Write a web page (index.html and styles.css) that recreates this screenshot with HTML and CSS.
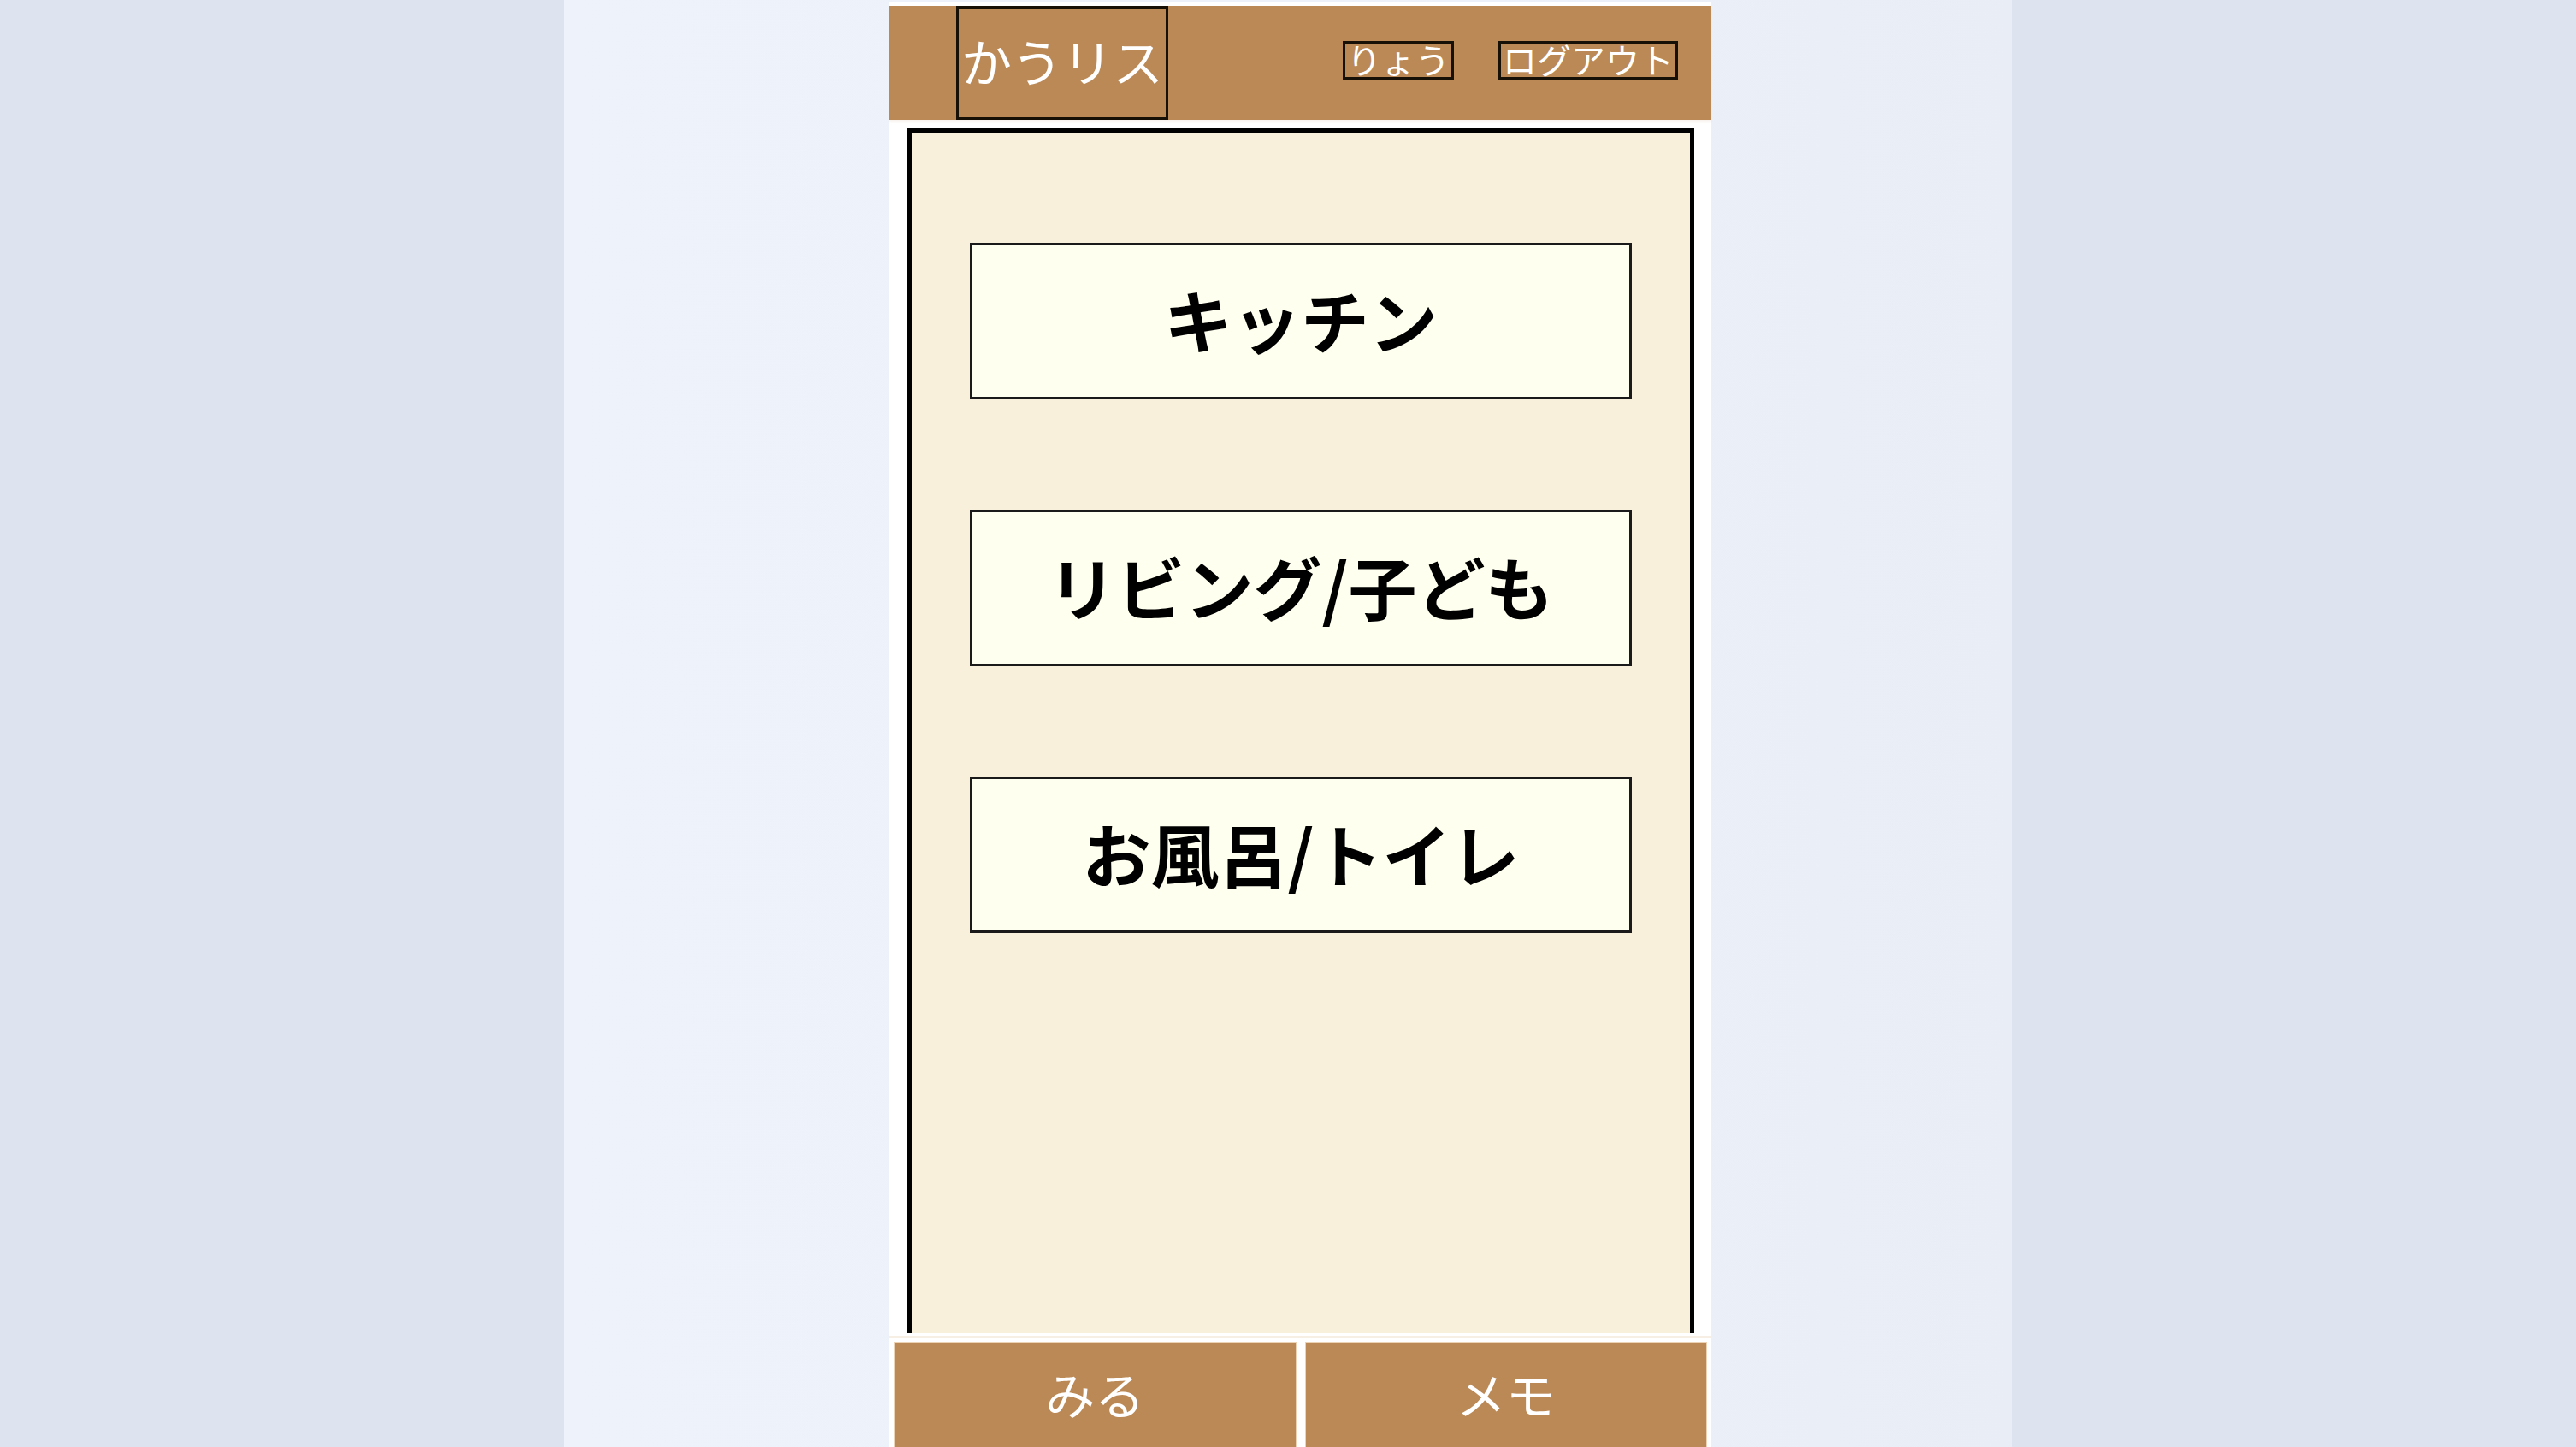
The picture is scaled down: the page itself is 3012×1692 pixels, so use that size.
FILE: index.html
```html
<!DOCTYPE html>
<html lang="ja">
<head>
<meta charset="utf-8">
<title>かうリス</title>
<link rel="stylesheet" href="styles.css">
</head>
<body>
<div class="stage">
  <div class="panel">
    <div class="app">
      <header class="topbar">
        <div class="logo">かうリス</div>
        <nav class="top-links">
          <a class="tag">りょう</a>
          <a class="tag">ログアウト</a>
        </nav>
      </header>
      <main class="board">
        <a class="room">キッチン</a>
        <a class="room">リビング/子ども</a>
        <a class="room">お風呂/トイレ</a>
      </main>
      <footer class="tabs">
        <a class="tab">みる</a>
        <a class="tab">メモ</a>
      </footer>
    </div>
  </div>
</div>
</body>
</html>
```
FILE: styles.css
```css
html, body {
  margin: 0;
  padding: 0;
}
body {
  background: #dde4ef;
  font-family: "Noto Sans CJK JP", "Noto Sans", sans-serif;
  overflow: hidden;
}
.stage {
  display: flex;
  justify-content: flex-start;
  min-height: 1692px;
}
.panel {
  margin-left: 659px;
  width: 1694px;
  min-height: 1692px;
  background: linear-gradient(90deg, #eef2fa 0%, #edf1f9 50%, #e9edf6 100%);
  display: flex;
}
.app {
  margin-left: 381px;
  margin-top: 2px;
  width: 961px;
  padding-top: 5px;
  background: #ffffff;
  display: flex;
  flex-direction: column;
}
.topbar {
  height: 133px;
  background: #bb8956;
  display: flex;
  align-items: flex-start;
  box-shadow: 0 3px 2px rgba(187, 137, 86, 0.10);
}
.logo {
  margin-left: 78px;
  box-sizing: border-box;
  width: 248px;
  height: 133px;
  border: 3px solid #161007;
  color: #ffffff;
  font-size: 59px;
  line-height: 1;
  display: flex;
  align-items: center;
  justify-content: center;
  padding-bottom: 7px;
}
.top-links {
  margin-left: auto;
  margin-right: 39px;
  margin-top: 41px;
  display: flex;
  gap: 52px;
}
.tag {
  display: block;
  border: 3px solid #161007;
  color: #ffffff;
  font-size: 40px;
  line-height: 37px;
  padding: 0 2px 2px;
}
.board {
  margin: 10px 20px 0 21px;
  height: 1409px;
  box-sizing: border-box;
  border: 5px solid #000000;
  border-bottom: none;
  background: #f9f0dc;
  padding-top: 129px;
  display: flex;
  flex-direction: column;
  align-items: center;
  gap: 129px;
}
.room {
  box-sizing: border-box;
  width: 774px;
  height: 183px;
  border: 3px solid #1a1a1a;
  background: #fffff0;
  color: #000000;
  font-size: 80px;
  font-weight: 700;
  display: flex;
  align-items: center;
  justify-content: center;
  padding-bottom: 7px;
}
.tabs {
  margin-top: 3px;
  border-top: 3px solid #f7efe4;
  padding: 4px 5px 0;
  display: flex;
  gap: 10px;
}
.tab {
  flex: 1;
  box-sizing: border-box;
  height: 130px;
  background: #bb8956;
  border: 1px solid #ecd3b6;
  color: #ffffff;
  font-size: 58px;
  display: flex;
  align-items: flex-start;
  justify-content: center;
  padding-top: 17px;
  line-height: 1.45;
}
```
